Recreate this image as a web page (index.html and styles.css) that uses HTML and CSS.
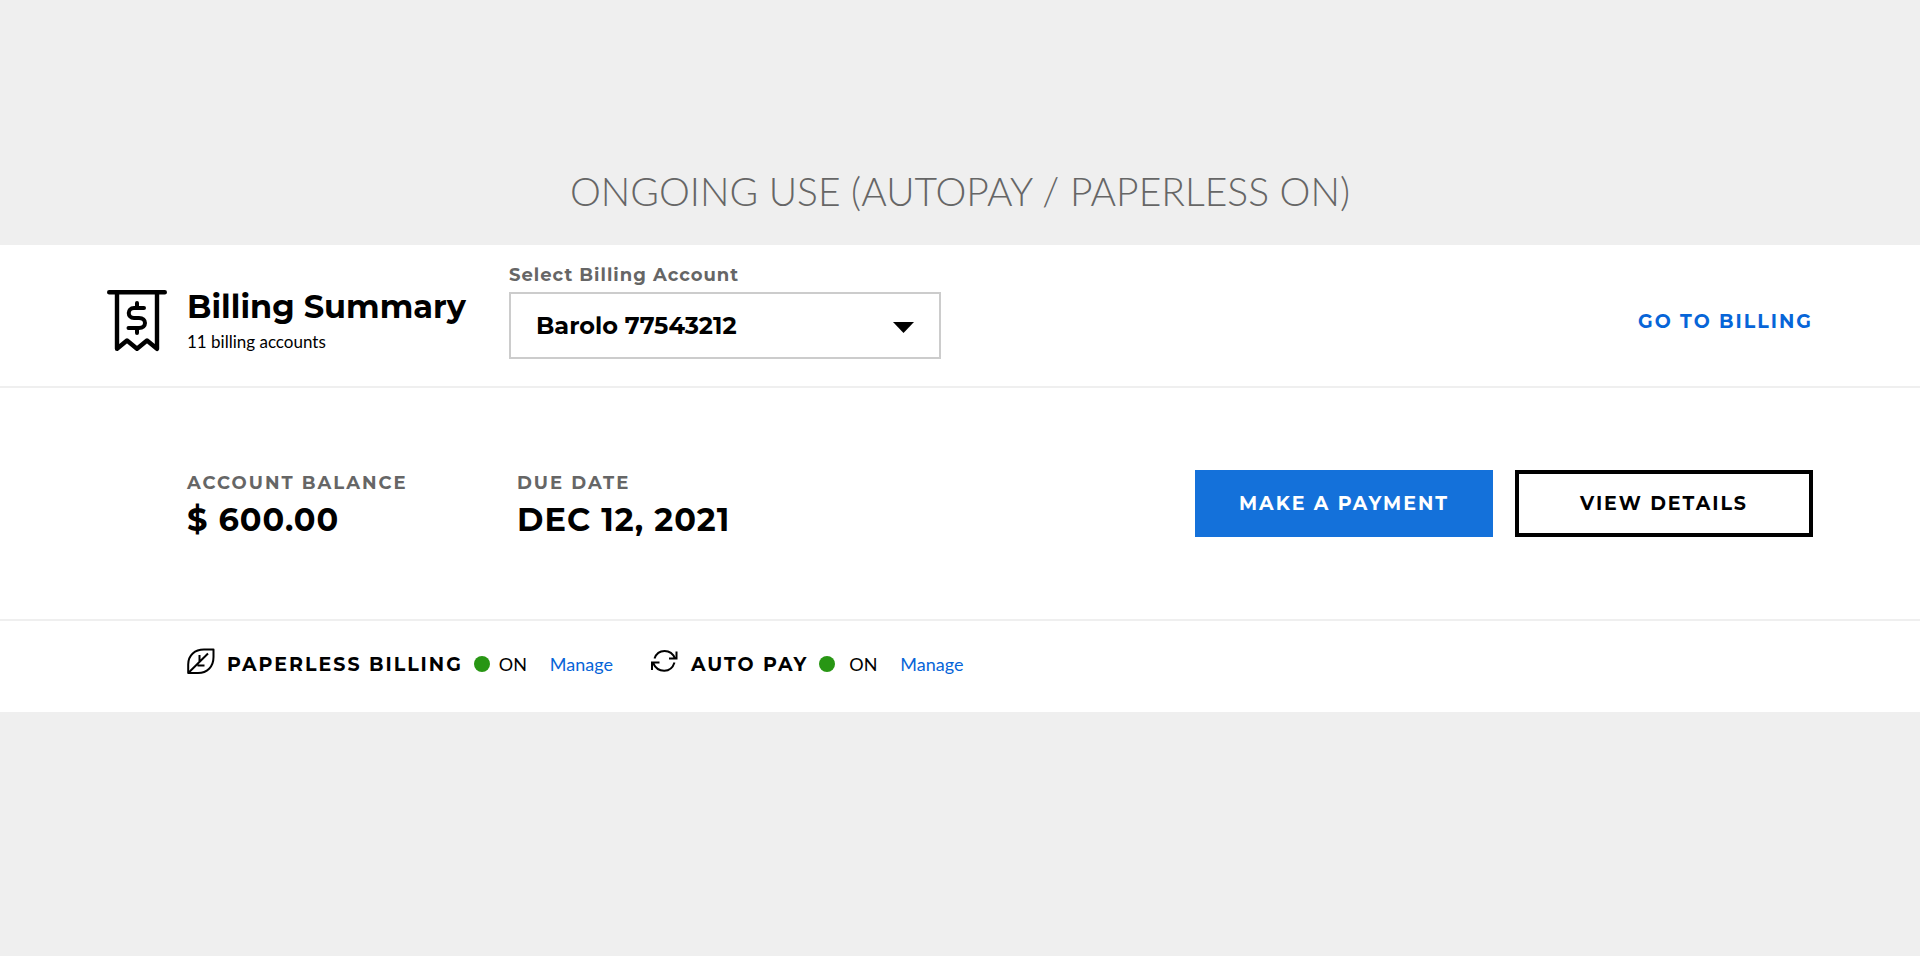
FILE: index.html
```html
<!DOCTYPE html>
<html lang="en">
<head>
<meta charset="utf-8">
<meta name="viewport" content="width=device-width, initial-scale=1">
<title>Billing Summary</title>
<link rel="stylesheet" href="styles.css">
</head>
<body>
<h1 class="page-title">ONGOING USE (AUTOPAY / PAPERLESS ON)</h1>
<main class="billing">
  <header class="billing-header">
    <div class="summary">
      <svg class="receipt-icon" viewBox="0 0 60 62" aria-hidden="true">
        <g fill="none" stroke="#000" stroke-width="4.400" stroke-linecap="round" stroke-linejoin="round">
          <path d="M2.200 2.200H57.800M10 3V58.800L20 50.500L30 58.800L40 50.500L50 58.800V3"/>
          <path stroke-width="4" d="M37 18H27C20 18 20 28 27 28H32C40 28 40 38 32 38H21.500M30 13V18M30 38V43"/>
        </g>
      </svg>
      <div class="summary-text">
        <h2 class="summary-title">Billing Summary</h2>
        <p class="summary-count">11 billing accounts</p>
      </div>
    </div>
    <div class="account">
      <label class="account-label" for="account">Select Billing Account</label>
      <div class="account-box">
        <select class="account-select" id="account"><option>Barolo 77543212</option></select>
        <svg class="caret" viewBox="0 0 21 11" aria-hidden="true"><path d="M0 0H21L10.5 11Z"/></svg>
      </div>
    </div>
    <a class="billing-link" href="#billing">GO TO BILLING</a>
  </header>
  <section class="balance">
    <dl class="facts">
      <div class="fact"><dt class="fact-label">ACCOUNT BALANCE</dt><dd class="fact-value">$ 600.00</dd></div>
      <div class="fact"><dt class="fact-label">DUE DATE</dt><dd class="fact-value">DEC 12, 2021</dd></div>
    </dl>
    <div class="actions">
      <button class="button button-primary" type="button">MAKE A PAYMENT</button>
      <button class="button button-outline" type="button">VIEW DETAILS</button>
    </div>
  </section>
  <footer class="settings">
    <div class="setting">
      <svg class="setting-icon" viewBox="0 0 28 28" aria-hidden="true">
        <g fill="none" stroke="#000" stroke-width="2" stroke-linejoin="round">
          <path d="M1.200 25V16.500C1.200 7 8 1.500 17 1.500H26.500V9C26.500 19 20 25 11 25Z"/>
          <path d="M1.500 24.700L21 5.500M12.500 7V14M10.500 17.500H17.500"/>
        </g>
      </svg>
      <span class="setting-name">PAPERLESS BILLING</span>
      <span class="dot"></span>
      <span class="state">ON</span>
      <a class="manage" href="#paperless">Manage</a>
    </div>
    <div class="setting setting-autopay">
      <svg class="setting-icon" viewBox="0 0 28 28" aria-hidden="true">
        <g fill="none" stroke="#000" stroke-width="2">
          <path d="M3.500 10.500C7 .5 20 .5 24 10.500M18 10.500H25.500V3.500M23.500 14.500C20 25.500 7 25.500 2 15M1 22V14.500H8.500"/>
        </g>
      </svg>
      <span class="setting-name">AUTO PAY</span>
      <span class="dot"></span>
      <span class="state">ON</span>
      <a class="manage" href="#autopay">Manage</a>
    </div>
  </footer>
</main>
</body>
</html>
```
FILE: styles.css
```css
* { box-sizing: border-box; }
body {
  margin: 0;
  padding-top: 167px;
  background: #efefef;
  color: #000;
  font-family: Montserrat, Inter, sans-serif;
}
h1, h2, p, dl, dd { margin: 0; }
a { text-decoration: none; color: #0765d8; }
.page-title {
  padding-bottom: 30px;
  font: 300 39px/48px Lato, sans-serif;
  text-align: center;
  color: #666;
}
.billing { background: #fff; }
.billing-header {
  display: flex;
  align-items: flex-start;
  padding: 20px 107px 27px;
  border-bottom: 2px solid #efefef;
}
.summary { display: flex; gap: 20px; width: 402px; padding-top: 22px; }
.receipt-icon { width: 60px; height: 66px; margin-top: 1px; }
.summary-title { font-size: 32px; line-height: 40px; font-weight: 700; white-space: nowrap; }
.summary-count { margin-top: 3px; font: 17px/24px Lato, sans-serif; }
.account { width: 432px; }
.account-label {
  display: block;
  margin-bottom: 7px;
  font-size: 18px;
  line-height: 20px;
  font-weight: 700;
  letter-spacing: 1px;
  color: #666;
}
.account-box { display: grid; align-items: center; }
.account-select {
  grid-area: 1 / 1;
  width: 100%;
  height: 67px;
  padding: 0 25px;
  appearance: none;
  border: 2px solid #ccc;
  border-radius: 0;
  background: #fff;
  color: #000;
  font: 700 24px/32px Montserrat, Inter, sans-serif;
}
.caret {
  grid-area: 1 / 1;
  justify-self: end;
  width: 21px;
  height: 11px;
  margin: 4px 27px 0 0;
  pointer-events: none;
}
.billing-link {
  margin: 45px 0 0 auto;
  font-size: 19px;
  line-height: 24px;
  font-weight: 700;
  letter-spacing: 2px;
}
.balance {
  display: flex;
  justify-content: space-between;
  padding: 82px 107px 82px 187px;
  border-bottom: 2px solid #efefef;
}
.facts { display: flex; padding-top: 1px; }
.fact { min-width: 330px; }
.fact-label {
  font-size: 18px;
  line-height: 24px;
  font-weight: 700;
  letter-spacing: 2px;
  color: #666;
}
.fact-value {
  margin-top: 8px;
  font-size: 32px;
  line-height: 34px;
  font-weight: 700;
  letter-spacing: 1px;
}
.actions { display: flex; gap: 22px; }
.button {
  width: 298px;
  height: 67px;
  border: 4px solid #000;
  padding: 0;
  font: 700 19px/24px Montserrat, Inter, sans-serif;
  letter-spacing: 2px;
}
.button-primary { border-color: #1471da; background: #1471da; color: #fff; }
.button-outline { background: #fff; color: #000; }
.settings { display: flex; gap: 38px; padding: 26px 107px 29px 187px; }
.setting { display: flex; align-items: center; height: 36px; }
.setting-icon { width: 28px; height: 28px; margin: 0 12px 6px 0; }
.setting-name { font-size: 19px; line-height: 24px; font-weight: 700; letter-spacing: 2px; }
.dot { width: 16px; height: 16px; margin: 0 9px 2px 11px; border-radius: 50%; background: #289614; }
.setting-autopay .dot { margin-right: 14px; }
.state { width: 51px; }
.state, .manage { padding-bottom: 2px; font: 18px/24px Lato, sans-serif; }
```
